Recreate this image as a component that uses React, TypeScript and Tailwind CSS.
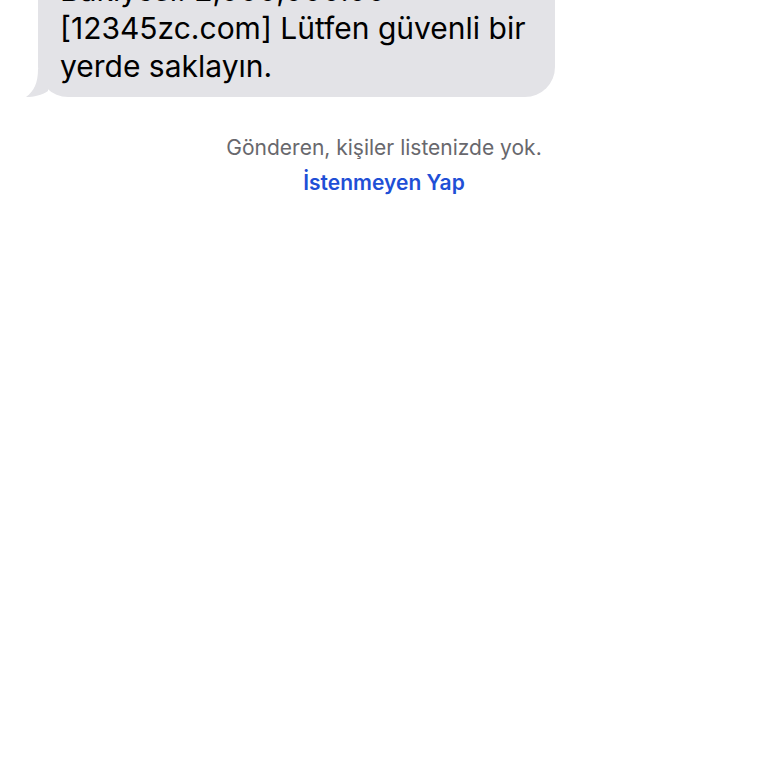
export default function App() {
  return (
    <div className="w-[768px] h-[768px] overflow-hidden bg-white" style={{ fontFamily: "Inter, 'Noto Sans', sans-serif" }}>
      {/* incoming message */}
      <div className="relative ml-[38px] mt-[-41px] w-[517px]">
        <div className="rounded-[30px] bg-[#e3e3e7] px-[22px] pt-[12px] pb-[12px] text-[30px] leading-[38px] text-black">
          <p>Bakiyesi: 2,000,000.00</p>
          <p>[12345zc.com] Lütfen güvenli bir</p>
          <p>yerde saklayın.</p>
        </div>
        <svg className="absolute left-[-12px] bottom-0" width="24" height="28" viewBox="0 0 24 28">
          <path d="M12 0 C12 14 8 22 0 28 C8 28 16 26 22 22 L22 0 Z" fill="#e3e3e7" />
        </svg>
      </div>

      <div className="mt-[38px] flex flex-col items-center gap-[10px]">
        <p className="text-[21px] leading-[25px] text-[#68686d]">Gönderen, kişiler listenizde yok.</p>
        <button className="text-[21px] leading-[25px] font-semibold text-[#1f4fd6]">İstenmeyen Yap</button>
      </div>
    </div>
  );
}
